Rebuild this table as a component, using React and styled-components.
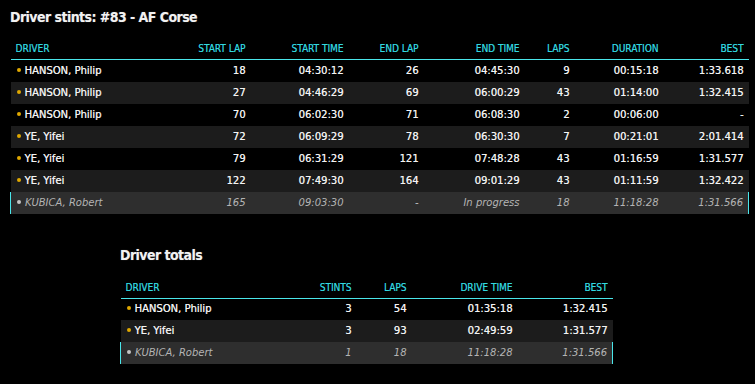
import React from 'react'
import styled, { createGlobalStyle } from 'styled-components'

const GlobalStyle = createGlobalStyle`
  html, body {
    margin: 0;
    padding: 0;
    background: #000000;
  }
  body {
    font-family: 'DejaVu Sans', Verdana, sans-serif;
  }
`;

const Page = styled.div`
  padding: 0 7px 0 10px;
  display: flex;
  flex-direction: column;
`;

const Section = styled.section`
  display: flex;
  flex-direction: column;
  align-items: flex-start;
  margin-left: ${p => p.$indent || 0}px;
  margin-top: ${p => p.$top || 0}px;
`;

const Heading = styled.h2`
  margin: 0;
  font-family: 'Liberation Sans Narrow', 'DejaVu Sans Condensed', 'Liberation Sans', sans-serif;
  font-weight: 700;
  font-size: 14px;
  line-height: 18px;
  letter-spacing: -0.55px;
  color: #f2f2f2;
  text-shadow: 0 0 1px rgba(255, 255, 255, 0.35);
`;

const Table = styled.table`
  margin-top: ${p => p.$top}px;
  width: ${p => p.$width}px;
  border-collapse: collapse;
  table-layout: fixed;
`;

const Th = styled.th`
  box-sizing: border-box;
  width: ${p => p.$w}px;
  padding: 8px 5px 4px;
  font-family: 'Liberation Sans Narrow', 'DejaVu Sans Condensed', 'Liberation Sans', sans-serif;
  font-weight: 400;
  font-size: 10px;
  line-height: 12px;
  color: #33d9e0;
  text-shadow: 0.3px 0 0 rgba(51, 217, 224, 0.6);
  text-align: ${p => (p.$left ? 'left' : 'right')};
  border-bottom: 1px solid #4ae6ea;
  white-space: nowrap;
`;

const Row = styled.tr`
  height: 22px;
  background: ${p => (p.$live ? '#2e2e2e' : p.$odd ? '#1c1c1c' : 'transparent')};
`;

const Td = styled.td`
  padding: 0 5px;
  font-size: 10px;
  line-height: 12px;
  color: ${p => (p.$live ? '#b4b4b4' : '#f4f4f4')};
  font-style: ${p => (p.$live ? 'italic' : 'normal')};
  text-shadow: ${p => (p.$live ? 'none' : '0.3px 0 0 rgba(255,255,255,0.7)')};
  text-align: ${p => (p.$left ? 'left' : 'right')};
  white-space: nowrap;
  &:first-child {
    padding-left: 6px;
    border-left: ${p => (p.$live ? '1px solid #4ae6ea' : 'none')};
  }
  &:last-child {
    border-right: ${p => (p.$live ? '1px solid #4ae6ea' : 'none')};
  }
`;

const Dot = styled.span`
  display: inline-block;
  width: 4px;
  height: 4px;
  border-radius: 50%;
  margin-right: 4px;
  vertical-align: 2px;
  background: ${p => (p.$live ? '#c4c4c4' : '#e0a800')};
`;

const stintCols = [
  { label: 'DRIVER', w: 150, left: true },
  { label: 'START LAP', w: 90 },
  { label: 'START TIME', w: 98 },
  { label: 'END LAP', w: 75 },
  { label: 'END TIME', w: 101 },
  { label: 'LAPS', w: 50 },
  { label: 'DURATION', w: 89 },
  { label: 'BEST', w: 85 },
];

const stints = [
  ['HANSON, Philip', '18', '04:30:12', '26', '04:45:30', '9', '00:15:18', '1:33.618'],
  ['HANSON, Philip', '27', '04:46:29', '69', '06:00:29', '43', '01:14:00', '1:32.415'],
  ['HANSON, Philip', '70', '06:02:30', '71', '06:08:30', '2', '00:06:00', '-'],
  ['YE, Yifei', '72', '06:09:29', '78', '06:30:30', '7', '00:21:01', '2:01.414'],
  ['YE, Yifei', '79', '06:31:29', '121', '07:48:28', '43', '01:16:59', '1:31.577'],
  ['YE, Yifei', '122', '07:49:30', '164', '09:01:29', '43', '01:11:59', '1:32.422'],
  ['KUBICA, Robert', '165', '09:03:30', '-', 'In progress', '18', '11:18:28', '1:31.566', true],
];

const totalCols = [
  { label: 'DRIVER', w: 176, left: true },
  { label: 'STINTS', w: 60 },
  { label: 'LAPS', w: 55 },
  { label: 'DRIVE TIME', w: 106 },
  { label: 'BEST', w: 95 },
];

const totals = [
  ['HANSON, Philip', '3', '54', '01:35:18', '1:32.415'],
  ['YE, Yifei', '3', '93', '02:49:59', '1:31.577'],
  ['KUBICA, Robert', '1', '18', '11:18:28', '1:31.566', true],
];

const DataTable = ({ cols, rows, width, top }) => (
  <Table $width={width} $top={top}>
    <thead>
      <tr>
        {cols.map(c => (
          <Th key={c.label} $w={c.w} $left={c.left}>{c.label}</Th>
        ))}
      </tr>
    </thead>
    <tbody>
      {rows.map((r, i) => {
        const live = r.length > cols.length && r[cols.length] === true
        return (
          <Row key={i} $odd={i % 2 === 1} $live={live}>
            {cols.map((c, j) => (
              <Td key={j} $left={c.left} $live={live}>
                {j === 0 && <Dot $live={live} />}
                {r[j]}
              </Td>
            ))}
          </Row>
        )
      })}
    </tbody>
  </Table>
)

const App = () => {
  return (
    <Page>
      <GlobalStyle />
      <Section $top={8}>
        <Heading>Driver stints: #83 - AF Corse</Heading>
        <DataTable cols={stintCols} rows={stints} width={738} top={9} />
      </Section>
      <Section $indent={110} $top={32}>
        <Heading>Driver totals</Heading>
        <DataTable cols={totalCols} rows={totals} width={492} top={10} />
      </Section>
    </Page>
  )
}

export default App;
